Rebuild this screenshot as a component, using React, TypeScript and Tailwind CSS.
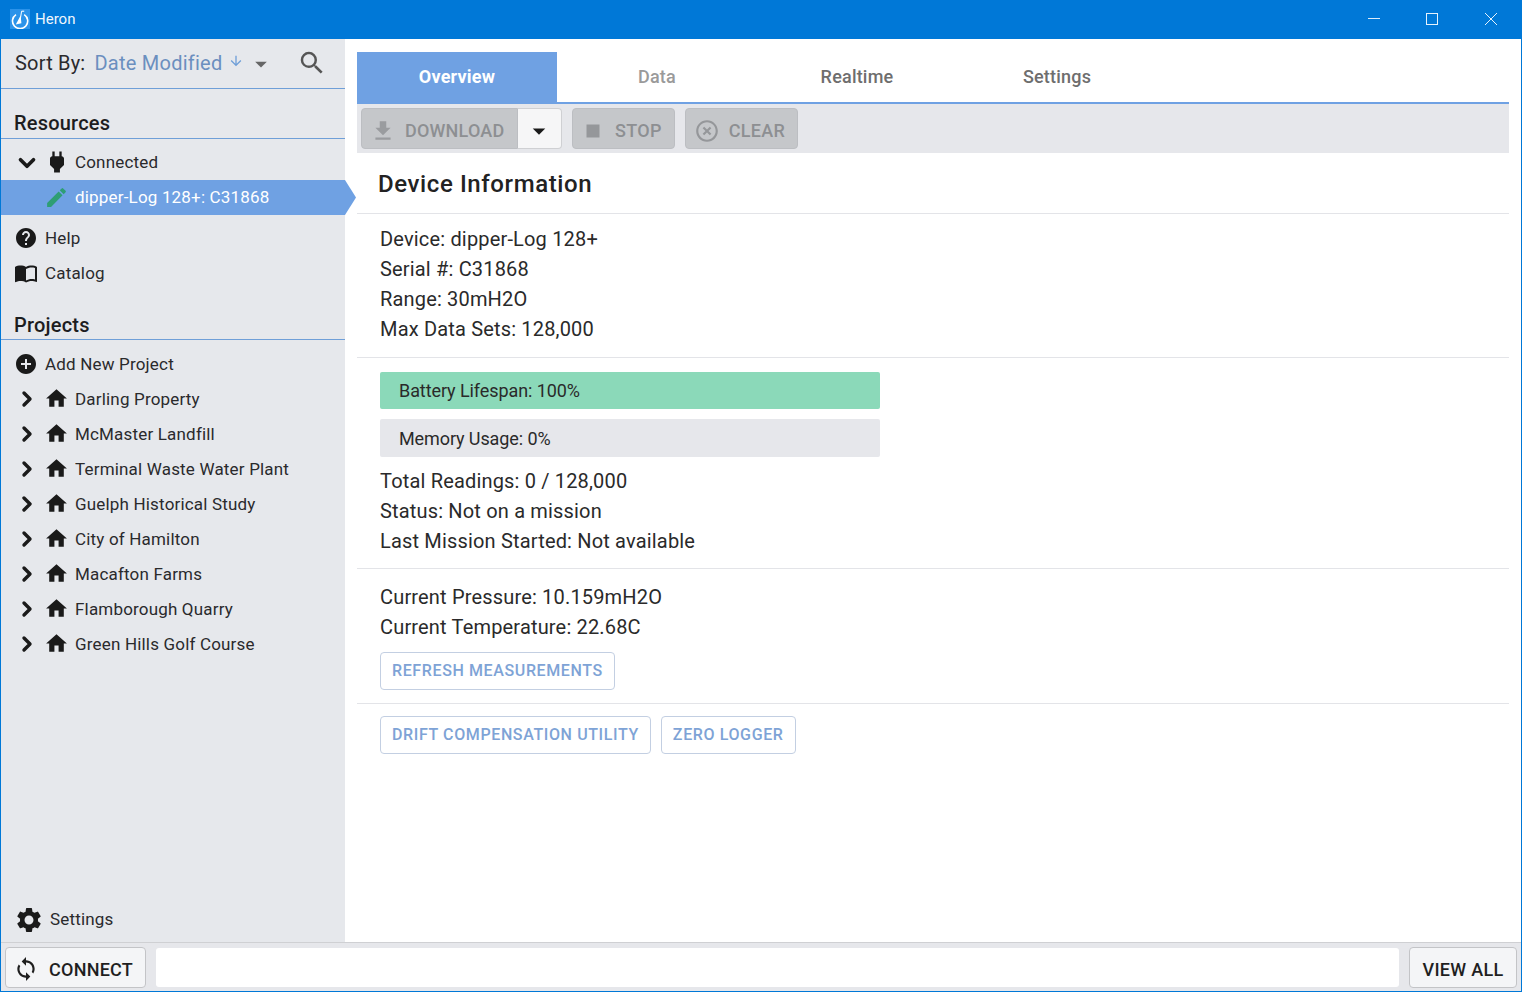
import {
  MdAddCircle,
  MdArrowDownward,
  MdArrowDropDown,
  MdEdit,
  MdFileDownload,
  MdHelp,
  MdHighlightOff,
  MdHome,
  MdImportContacts,
  MdPower,
  MdSearch,
  MdSettings,
  MdStop,
  MdSync,
} from "react-icons/md";
import { ChevronDown, ChevronRight } from "lucide-react";

const projects = [
  "Darling Property",
  "McMaster Landfill",
  "Terminal Waste Water Plant",
  "Guelph Historical Study",
  "City of Hamilton",
  "Macafton Farms",
  "Flamborough Quarry",
  "Green Hills Golf Course",
];

const tabs = ["Data", "Realtime", "Settings"];

const Logo = () => (
  <svg viewBox="0 0 20 20" className="h-5 w-5 shrink-0">
    <rect width="20" height="20" fill="#2b93ea" />
    <path d="M6 5.6A7.6 7.6 0 1 0 14.2 5.6" fill="none" stroke="#fff" strokeWidth="1.6" />
    <path d="M11.6 2.2L10 12" stroke="#fff" strokeWidth="1" fill="none" />
    <path d="M11.6 2.2h2.6" stroke="#fff" strokeWidth="1.1" />
    <path d="M10.6 6.5L11.4 14.2 5.8 15.4z" fill="#fff" />
  </svg>
);

const SectionTitle = ({ title, className }: { title: string; className: string }) => (
  <div
    className={`flex items-end border-b border-[#6f9fd8] pl-[13px] text-[20px] font-medium leading-[24px] tracking-[0.2px] text-[#1d1d1f] ${className}`}
  >
    {title}
  </div>
);

const TreeRow = ({ name }: { name: string }) => (
  <div className="flex h-[35px] items-center">
    <ChevronRight size={24} strokeWidth={3.4} className="mb-[2px] ml-[14px] text-[#1a1a1a]" />
    <MdHome size={25} className="mb-[2px] ml-[5px] text-[#1a1a1a]" />
    <span className="ml-[6px] text-[17px] tracking-[0.18px] text-[#2a2a2c]">{name}</span>
  </div>
);

const LinkRow = ({ icon, label }: { icon: React.ReactNode; label: string }) => (
  <div className="flex h-[35px] items-center pl-[13px]">
    <div className="mb-[1px] flex w-[24px] justify-center text-[#1a1a1a]">{icon}</div>
    <span className="ml-[7px] text-[17px] tracking-[0.18px] text-[#2a2a2c]">{label}</span>
  </div>
);

const Sidebar = () => (
  <div className="flex w-[344px] shrink-0 flex-col bg-[#e6e8ec]">
    <div className="flex h-[50px] shrink-0 items-center border-b border-[#6f9fd8] pb-[2px] pl-[14px]">
      <span className="text-[20px] tracking-[0.2px] text-[#2a2a2c]">Sort By:</span>
      <span className="ml-[9px] text-[20px] tracking-[0.25px] text-[#6b8fbf]">Date Modified</span>
      <MdArrowDownward size={16} className="mb-[4px] ml-[5px] text-[#6f9fd8]" />
      <MdArrowDropDown size={28} className="ml-[3px] mt-[2px] text-[#666]" />
      <MdSearch size={30} className="ml-[22px] text-[#555]" />
    </div>
    <SectionTitle title="Resources" className="h-[50px] pb-[3px]" />
    <div className="pt-[6px]">
      <div className="flex h-[35px] items-center">
        <ChevronDown size={26} strokeWidth={3.4} className="ml-[13px] text-[#1a1a1a]" />
        <MdPower size={28} className="mb-[1px] ml-[3px] text-[#1a1a1a]" />
        <span className="ml-[4px] text-[17px] tracking-[0.18px] text-[#2a2a2c]">Connected</span>
      </div>
      <div className="relative z-10 flex h-[35px] w-[355px] items-center bg-[#6fa1e3] [clip-path:polygon(0_0,344px_0,100%_50%,344px_100%,0_100%)]">
        <MdEdit size={25} className="ml-[43px] text-[#2e9e74]" />
        <span className="ml-[6px] text-[17px] tracking-[0.18px] text-white">dipper-Log 128+: C31868</span>
      </div>
    </div>
    <div className="pt-[6px]">
      <LinkRow icon={<MdHelp size={26} />} label="Help" />
      <LinkRow icon={<MdImportContacts size={26} />} label="Catalog" />
    </div>
    <SectionTitle title="Projects" className="h-[49px] pb-[2px]" />
    <div className="pt-[7px]">
      <LinkRow icon={<MdAddCircle size={26} />} label="Add New Project" />
      {projects.map((p) => (
        <TreeRow key={p} name={p} />
      ))}
    </div>
    <div className="mb-[5px] mt-auto flex h-[35px] items-center pl-[13px]">
      <MdSettings size={30} className="text-[#1a1a1a]" />
      <span className="ml-[6px] text-[17px] tracking-[0.18px] text-[#2a2a2c]">Settings</span>
    </div>
  </div>
);

const ToolButton = ({ icon, label }: { icon: React.ReactNode; label: string }) => (
  <div className="flex h-[41px] items-center rounded-[4px] border border-[#bcbec2] bg-[#c5c7ca] pr-[12px] pt-[4px] text-[#8d8f92]">
    {icon}
    <span className="text-[18px] font-medium tracking-[0.3px]">{label}</span>
  </div>
);

const OutlineButton = ({ label }: { label: string }) => (
  <div className="flex h-[38px] items-center rounded-[4px] border border-[#c3cfe2] px-[11px] text-[16px] font-medium tracking-[0.62px] text-[#7ea3d6]">
    {label}
  </div>
);

const Content = () => (
  <div className="flex min-w-0 flex-1 flex-col bg-white px-[12px] pt-[13px]">
    <div className="flex h-[52px] shrink-0 border-b-2 border-[#6fa1e3]">
      <div className="flex w-[200px] items-center justify-center bg-[#6fa1e3] pb-[2px] text-[18px] font-bold tracking-[0.2px] text-white">
        Overview
      </div>
      {tabs.map((t) => (
        <div
          key={t}
          className={`flex w-[200px] items-center justify-center pb-[2px] text-[18px] font-medium tracking-[0.2px] ${
            t === "Data" ? "text-[#9a9a9a]" : "text-[#6e6e6e]"
          }`}
        >
          {t}
        </div>
      ))}
    </div>
    <div className="flex h-[49px] shrink-0 items-center bg-[#e6e7eb] pl-[4px]">
      <div className="flex">
        <div className="flex h-[41px] w-[157px] items-center rounded-l-[4px] border border-[#bcbec2] bg-[#c5c7ca] pt-[4px] text-[#8d8f92]">
          <MdFileDownload size={26} className="ml-[8px] text-[#9a9c9f]" />
          <span className="ml-[9px] text-[18px] font-medium tracking-[0.2px]">DOWNLOAD</span>
        </div>
        <div className="flex h-[41px] w-[44px] items-center justify-center rounded-r-[4px] border border-l-0 border-[#cfd0d3] bg-[#f6f6f7] pr-[2px] pt-[4px]">
          <MdArrowDropDown size={30} className="text-[#1a1a1a]" />
        </div>
      </div>
      <div className="ml-[10px]">
        <ToolButton
          icon={<MdStop size={26} className="ml-[7px] mr-[9px] text-[#95979a]" />}
          label="STOP"
        />
      </div>
      <div className="ml-[10px]">
        <ToolButton
          icon={<MdHighlightOff size={26} className="ml-[8px] mr-[9px] text-[#95979a]" />}
          label="CLEAR"
        />
      </div>
    </div>

    <div className="flex h-[61px] shrink-0 items-center border-b border-[#e3e4e8] pl-[21px] pt-[2px] text-[24px] font-medium leading-none tracking-[0.6px] text-[#222]">
      Device Information
    </div>

    <div className="shrink-0 border-b border-[#e3e4e8] pb-[13px] pl-[23px] pt-[10px] text-[20px] leading-[30px] tracking-[0.17px] text-[#2a2a2a]">
      <div>Device: dipper-Log 128+</div>
      <div>Serial #: C31868</div>
      <div>Range: 30mH2O</div>
      <div>Max Data Sets: 128,000</div>
    </div>

    <div className="shrink-0 border-b border-[#e3e4e8] pb-[12px] pl-[23px] pt-[14px] text-[20px] leading-[30px] tracking-[0.17px] text-[#2a2a2a]">
      <div className="flex h-[37px] w-[500px] items-center rounded-[2px] bg-[#8bd9b9] pl-[19px] text-[18px] tracking-[-0.08px]">
        Battery Lifespan: 100%
      </div>
      <div className="mt-[10px] flex h-[38px] w-[500px] items-center rounded-[2px] bg-[#e6e7eb] pl-[19px] pt-[2px] text-[18px] tracking-[-0.1px]">
        Memory Usage: 0%
      </div>
      <div className="mt-[9px]">Total Readings: 0 / 128,000</div>
      <div>Status: Not on a mission</div>
      <div>Last Mission Started: Not available</div>
    </div>

    <div className="shrink-0 border-b border-[#e3e4e8] pb-[13px] pl-[23px] pt-[13px] text-[20px] leading-[30px] tracking-[0.17px] text-[#2a2a2a]">
      <div>Current Pressure: 10.159mH2O</div>
      <div>Current Temperature: 22.68C</div>
      <div className="mt-[10px] flex">
        <OutlineButton label="REFRESH MEASUREMENTS" />
      </div>
    </div>

    <div className="flex shrink-0 gap-[10px] pl-[23px] pt-[12px]">
      <OutlineButton label="DRIFT COMPENSATION UTILITY" />
      <OutlineButton label="ZERO LOGGER" />
    </div>
  </div>
);

const App = () => {
  return (
    <div className="flex h-[992px] w-[1522px] flex-col overflow-hidden bg-[#0078d7] font-['Roboto',sans-serif]">
      <div className="flex h-[39px] shrink-0 items-center bg-[#0078d7] pb-[1px] pl-[10px] text-white">
        <Logo />
        <span className="ml-[5px] text-[15px] text-[#eef6fd]">Heron</span>
        <div className="ml-auto flex items-center">
          <svg viewBox="0 0 14 14" className="h-[14px] w-[14px]">
            <path d="M1 6.5h12" stroke="#dcecfa" strokeWidth="1" />
          </svg>
          <svg viewBox="0 0 14 14" className="ml-[44px] h-[14px] w-[14px]">
            <rect x="1.5" y="1.5" width="11" height="11" fill="none" stroke="#e6f2fc" strokeWidth="1" />
          </svg>
          <svg viewBox="0 0 14 14" className="ml-[45px] mr-[24px] h-[14px] w-[14px]">
            <path d="M1 1l12 12M13 1L1 13" stroke="#e6f2fc" strokeWidth="1" />
          </svg>
        </div>
      </div>
      <div className="mx-px mb-px flex min-h-0 flex-1 flex-col">
        <div className="flex min-h-0 flex-1">
          <Sidebar />
          <Content />
        </div>
        <div className="flex h-[49px] shrink-0 items-center border-t border-[#cfd0d3] bg-[#e6e7eb] pl-[4px] pr-[4px]">
          <div className="flex h-[41px] w-[141px] items-center rounded-[4px] border border-[#c3c4c7] bg-[#f4f5f7] pt-[4px]">
            <MdSync size={26} className="ml-[7px] text-[#1f1f1f]" />
            <span className="ml-[10px] text-[18px] font-medium tracking-[0.25px] text-[#1f1f1f]">CONNECT</span>
          </div>
          <div className="ml-[10px] h-[39px] flex-1 rounded-[3px] bg-white" />
          <div className="ml-[10px] flex h-[41px] w-[108px] items-center justify-center rounded-[4px] border border-[#c3c4c7] bg-[#f4f5f7] pt-[4px] text-[18px] font-medium tracking-[0.3px] text-[#1f1f1f]">
            VIEW ALL
          </div>
        </div>
      </div>
    </div>
  );
};

export default App;
